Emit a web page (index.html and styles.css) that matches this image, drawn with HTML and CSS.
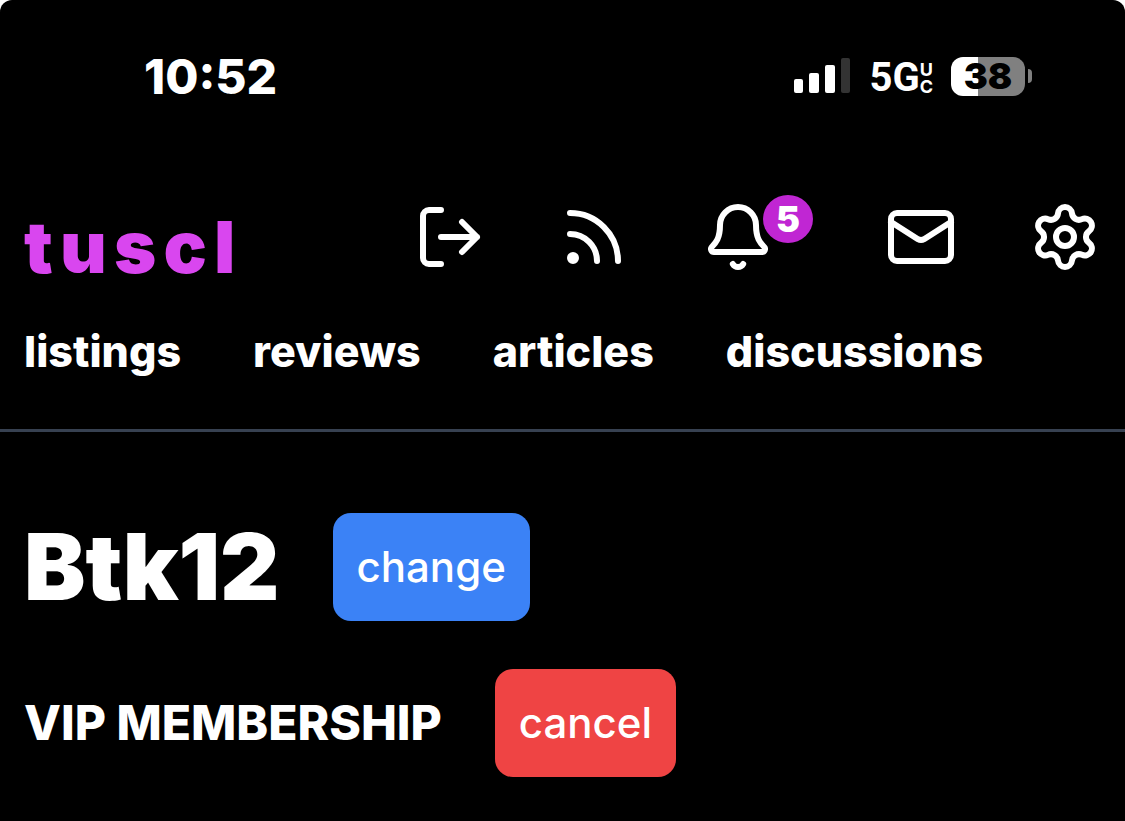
FILE: index.html
```
<!DOCTYPE html>
<html lang="en">
<head>
  <meta charset="UTF-8" />
  <meta name="viewport" content="width=device-width, initial-scale=1" />
  <title>tuscl</title>
  <link rel="stylesheet" href="styles.css">
</head>
<body>
  <div class="screen">
    <div class="status-bar">
      <span class="clock">10:52</span>
      <div class="status-icons">
        <svg class="signal" width="57" height="36" viewBox="0 0 57 36" aria-hidden="true">
          <rect x="0" y="21" width="9" height="14" rx="2" />
          <rect x="15" y="15" width="10" height="20" rx="2" />
          <rect x="31" y="7" width="10" height="28" rx="2" />
          <rect class="off" x="47" y="0" width="9" height="35" rx="2" />
        </svg>
        <div class="network">5G<span class="network-sub"><span>U</span><span>C</span></span></div>
        <div class="battery">
          <span class="battery-level">38</span>
          <span class="battery-tip"></span>
        </div>
      </div>
    </div>

    <header>
      <div class="top-row">
        <a class="logo" href="#">tuscl</a>
        <nav class="icons" aria-label="Account">
          <a href="#" aria-label="Log out">
            <svg class="icon" viewBox="0 0 24 24"><path d="M9 3H5a2 2 0 0 0-2 2v14a2 2 0 0 0 2 2h4M16 7l5 5-5 5M9 12h12" /></svg>
          </a>
          <a href="#" aria-label="Feed">
            <svg class="icon" viewBox="0 0 24 24"><path d="M4 11a9 9 0 0 1 9 9M4 4a16 16 0 0 1 16 16" /><circle cx="5" cy="19" r="1" /></svg>
          </a>
          <a class="alerts" href="#" aria-label="Notifications">
            <svg class="icon" viewBox="0 0 24 24"><path d="M10.268 21a2 2 0 0 0 3.464 0M3.262 15.326A1 1 0 0 0 4 17h16a1 1 0 0 0 .74-1.673C19.41 13.956 18 12.499 18 8A6 6 0 0 0 6 8c0 4.499-1.411 5.956-2.738 7.326" /></svg>
            <span class="badge">5</span>
          </a>
          <a href="#" aria-label="Messages">
            <svg class="icon" viewBox="0 0 24 24"><rect x="2" y="4" width="20" height="16" rx="2" /><path d="m22 7-8.991 5.727a2 2 0 0 1-2.009 0L2 7" /></svg>
          </a>
          <a href="#" aria-label="Settings">
            <svg class="icon" viewBox="0 0 24 24"><path d="M9.671 4.136a2.34 2.34 0 0 1 4.659 0 2.34 2.34 0 0 0 3.319 1.915 2.34 2.34 0 0 1 2.33 4.033 2.34 2.34 0 0 0 0 3.831 2.34 2.34 0 0 1-2.33 4.033 2.34 2.34 0 0 0-3.319 1.915 2.34 2.34 0 0 1-4.659 0 2.34 2.34 0 0 0-3.32-1.915 2.34 2.34 0 0 1-2.33-4.033 2.34 2.34 0 0 0 0-3.831A2.34 2.34 0 0 1 6.35 6.051a2.34 2.34 0 0 0 3.319-1.915" /><circle cx="12" cy="12" r="3" /></svg>
          </a>
        </nav>
      </div>
      <nav class="menu" aria-label="Main">
        <a href="#">listings</a>
        <a href="#">reviews</a>
        <a href="#">articles</a>
        <a href="#">discussions</a>
      </nav>
    </header>

    <main>
      <div class="row">
        <h1>Btk12</h1>
        <button type="button" class="btn btn-blue">change</button>
      </div>
      <div class="row">
        <h2>VIP MEMBERSHIP</h2>
        <button type="button" class="btn btn-red">cancel</button>
      </div>
    </main>
  </div>
</body>
</html>
```
FILE: styles.css
```
* {
  box-sizing: border-box;
}

body {
  margin: 0;
  background: #fff;
  color: #fff;
  font-family: Inter, "Liberation Sans", sans-serif;
}

a {
  color: inherit;
  text-decoration: none;
}

.screen {
  min-height: 100vh;
  background: #000;
  border-radius: 12px 12px 0 0;
}

/* status bar */
.status-bar {
  display: flex;
  justify-content: space-between;
  align-items: center;
  height: 152px;
  padding: 0 93px 0 144px;
}

.clock {
  font-size: 48px;
  font-weight: 800;
}

.status-icons {
  display: flex;
  align-items: center;
}

.signal {
  fill: #fff;
}

.signal .off {
  fill: #333;
}

.network {
  display: flex;
  align-items: center;
  margin-left: 18px;
  padding-top: 4px;
  font-family: Roboto, sans-serif;
  font-size: 40px;
  font-weight: 700;
  line-height: 40px;
}

.network-sub {
  display: flex;
  flex-direction: column;
  font-family: Inter, sans-serif;
  font-size: 18px;
  line-height: 17px;
}

.battery {
  display: flex;
  align-items: center;
  gap: 3px;
  margin-left: 18px;
}

.battery-level {
  width: 74px;
  border-radius: 12px;
  background: linear-gradient(to right, #fff 37%, #808080 37%);
  color: #000;
  font-size: 36px;
  font-weight: 900;
  line-height: 39px;
  text-align: center;
}

.battery-tip {
  width: 4px;
  height: 14px;
  border-radius: 0 4px 4px 0;
  background: #808080;
}

/* header */
header {
  padding: 49px 24px 42px;
  border-bottom: 3px solid #374151;
}

.top-row {
  display: flex;
  justify-content: space-between;
}

.logo {
  margin-top: 10px;
  color: #d946ef;
  font-size: 72px;
  font-weight: 900;
  line-height: 72px;
  letter-spacing: 0.1em;
}

.icons {
  display: flex;
  gap: 72px;
}

.icon {
  display: block;
  width: 72px;
  height: 72px;
  fill: none;
  stroke: #fff;
  stroke-width: 2;
  stroke-linecap: round;
  stroke-linejoin: round;
}

.alerts {
  position: relative;
  padding-right: 39px;
}

.badge {
  position: absolute;
  top: -6px;
  right: 0;
  width: 50px;
  height: 48px;
  border-radius: 50%;
  background: #c026d3;
  font-size: 36px;
  font-weight: 900;
  line-height: 48px;
  text-align: center;
}

.menu {
  display: flex;
  gap: 72px;
  margin-top: 32px;
  font-size: 43px;
  font-weight: 800;
  line-height: 72px;
}

/* profile */
main {
  display: flex;
  flex-direction: column;
  gap: 48px;
  padding: 81px 24px 44px;
}

.row {
  display: flex;
  align-items: center;
  gap: 53px;
}

h1,
h2 {
  margin: 0;
}

h1 {
  font-size: 92px;
  font-weight: 900;
  line-height: 96px;
}

h2 {
  font-size: 48px;
  font-weight: 800;
  line-height: 72px;
}

.btn {
  padding: 18px 24px;
  border: none;
  border-radius: 18px;
  color: #fff;
  font-family: inherit;
  font-size: 42px;
  font-weight: 500;
  line-height: 72px;
  cursor: pointer;
}

.btn-blue {
  background: #3b82f6;
}

.btn-red {
  background: #ef4444;
}
```
